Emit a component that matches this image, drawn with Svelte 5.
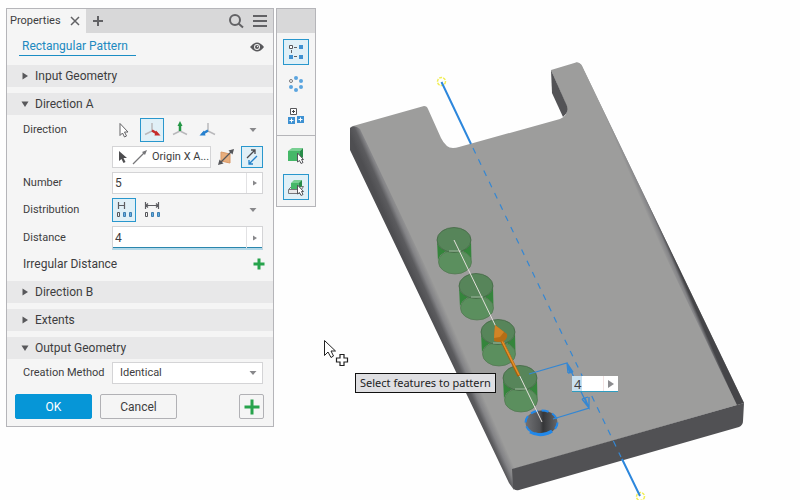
<script>
    let tool = $state('rectangular');
    let boundary = $state('geometry');
    let direction = $state('x');
    let distribution = $state('spacing');
    let flipped = $state(true);
    let number = $state('5');
    let distance = $state('4');
    let method = $state('Identical');
    let open = $state({ input: false, a: true, b: false, extents: false, output: true });

    const axes = [
        { id: 'pick', label: 'Select direction' },
        { id: 'x', label: 'X axis' },
        { id: 'y', label: 'Y axis' },
        { id: 'z', label: 'Z axis' }
    ];

    // one preview cylinder per occurrence, from far to near
    const copies = [
        { x: 454, y: 240 },
        { x: 476, y: 286 },
        { x: 498, y: 332 },
        { x: 520, y: 378 }
    ];
</script>

{#snippet header(key, title)}
    <h2>
        <button class="section-title" aria-expanded={open[key]} onclick={() => (open[key] = !open[key])}>
            <svg width="8" height="8" viewBox="0 0 8 8">
                {#if open[key]}
                    <path d="M0.5 1.5h7L4 7z" fill="#58585b" />
                {:else}
                    <path d="M1.5 0.5v7L7 4z" fill="#58585b" />
                {/if}
            </svg>
            {title}
        </button>
    </h2>
{/snippet}

{#snippet more(label)}
    <button class="more" aria-label={label}>
        <svg width="8" height="6" viewBox="0 0 8 6"><path d="M0.5 1h7L4 5z" fill="#88888b" /></svg>
    </button>
{/snippet}

<main>
    <div class="viewport">
        <svg class="scene" viewBox="0 0 800 500" role="img" aria-label="Plate with hole pattern preview">
            <defs>
                <linearGradient id="left-edge" gradientUnits="userSpaceOnUse" x1="430" y1="318" x2="446" y2="311">
                    <stop offset="0" stop-color="#4e4e51" />
                    <stop offset="0.4" stop-color="#5c5c5f" />
                    <stop offset="0.65" stop-color="#838386" />
                    <stop offset="1" stop-color="#9d9d9c" />
                </linearGradient>
                <linearGradient id="right-edge" gradientUnits="userSpaceOnUse" x1="657" y1="238" x2="664" y2="235">
                    <stop offset="0" stop-color="#9d9d9c" />
                    <stop offset="0.6" stop-color="#838386" />
                    <stop offset="1" stop-color="#454548" />
                </linearGradient>
                <linearGradient id="hole" x1="0" y1="0" x2="1" y2="0">
                    <stop offset="0" stop-color="#707174" />
                    <stop offset="0.45" stop-color="#505154" />
                    <stop offset="0.55" stop-color="#353638" />
                    <stop offset="1" stop-color="#66676a" />
                </linearGradient>
            </defs>

            <!-- plate -->
            <path d="M350 129Q350 127 353 126L424 106Q427 106 428 109L441 138Q446 148 453 148Q456 148 459 147L560 119Q568 116 567 107L551 70L576 62.500Q580 62 582 66L744 403L514 469Q510 468 508 464z" fill="#9d9d9c" />
            <path d="M350 128L350 150L509 483L514 490L514 468L520 465L360 129Q354 124 350 128z" fill="url(#left-edge)" />
            <path d="M576 62.500Q580 62 582 66L744 403L737 405L574 66z" fill="url(#right-edge)" />
            <path d="M512 469L744 403L743 421Q743 425 739 427L519 490Q514 491 513 487z" fill="#515154" />
            <path d="M551 70L567 106Q569 112 563 117L552 93z" fill="#535356" />

            <!-- axis -->
            <circle cx="441.500" cy="81.500" r="4" fill="none" stroke="#f1ee58" stroke-width="1.500" stroke-dasharray="3 1" />
            <circle cx="640.500" cy="496.500" r="4" fill="none" stroke="#f1ee58" stroke-width="1.500" stroke-dasharray="3 1" />
            <path d="M441.500 82L471 144M622 459L640 496" stroke="#2d87dc" stroke-width="2" />
            <path d="M473 148L621 457" stroke="#3487d3" stroke-width="1.200" stroke-dasharray="6 6.500" />

            {#each copies as c}
                <path d="M{c.x - 17} {c.y}L{c.x - 16} {c.y + 22}A16.500 12 0 0 1 {c.x + 17.5} {c.y + 22}L{c.x + 17} {c.y}A17 12.500 0 0 1 {c.x - 17} {c.y}z" fill="#35853c" />
                <ellipse cx={c.x + 1} cy={c.y + 22} rx="16.500" ry="12" fill="#5b8f5e" stroke="#50764f" stroke-width="0.700" />
                <ellipse cx={c.x} cy={c.y} rx="17" ry="12.500" fill="#57855a" stroke="#426744" stroke-width="0.800" />
                <path d="M{c.x - 5} {c.y + 11}h12" stroke="#9fb69e" stroke-width="1" />
            {/each}

            <!-- original hole -->
            <ellipse cx="541.500" cy="422.500" rx="16" ry="12" fill="url(#hole)" stroke="#2188ea" stroke-width="2" stroke-dasharray="7 4" />
            <path d="M530 432Q541 438 552 431" fill="none" stroke="#2188ea" stroke-width="3" />
            <path d="M454 240L542 422" stroke="#e4e0dc" stroke-width="1" />

            <!-- direction arrow -->
            <path d="M499 335L519 376" stroke="#a85f0a" stroke-width="3" />
            <path d="M499 335L519 375" stroke="#e6912b" stroke-width="1.500" />
            <path d="M495 325L507 334Q508 338 504 341Q499 343 494 341z" fill="#b56d15" />
            <path d="M495 325L504 332L500 337L494 338z" fill="#d18426" />

            <!-- dimension -->
            <path d="M529 374L567 363L589 408L553 419M567 363L568 373M567 363L573 372M568 373L573 372M567 363L570 373M582 399L589 408L589 397M582 399L588 397M585 398L589 408" fill="none" stroke="#3487d3" stroke-width="1.300" />

            <!-- pointer -->
            <path d="M324.500 340.500V355.500L328 352L331 357.500L333.500 356L331 351H335.500z" fill="#fff" stroke="#222" stroke-width="1" />
            <path d="M340 354.500h4v3.500h3.500v4H344v3.500h-4V362h-3.500v-4H340z" fill="#fff" stroke="#222" stroke-width="1.200" />
        </svg>

        <div class="tooltip" role="tooltip">Select features to pattern</div>
        <div class="dimension">
            <input aria-label="Spacing" bind:value={distance} />
            <button aria-label="Spacing options">
                <svg width="8" height="8" viewBox="0 0 8 8"><path d="M1 0v8l6-4z" fill="#8c8c8f" /></svg>
            </button>
        </div>
    </div>

    <section class="panel">
        <div class="tabs">
            <div class="tab">
                Properties
                <button class="plain" aria-label="Close">
                    <svg width="10" height="10" viewBox="0 0 10 10"><path d="M1 1l8 8M9 1l-8 8" stroke="#626265" stroke-width="1.500" /></svg>
                </button>
            </div>
            <button class="plain add-tab" aria-label="Add tab">
                <svg width="10" height="10" viewBox="0 0 10 10"><path d="M5 0v10M0 5h10" stroke="#626265" stroke-width="2" /></svg>
            </button>
            <div class="tab-tools">
                <button class="plain" aria-label="Search">
                    <svg width="16" height="16" viewBox="0 0 16 16"><circle cx="7" cy="7" r="5" fill="none" stroke="#626265" stroke-width="2" /><path d="M10.500 10.500l4.500 4" stroke="#626265" stroke-width="2" /></svg>
                </button>
                <button class="plain" aria-label="Menu">
                    <svg width="14" height="12" viewBox="0 0 14 12"><path d="M0 1h14M0 6h14M0 11h14" stroke="#626265" stroke-width="2" /></svg>
                </button>
            </div>
        </div>

        <div class="feature">
            <a href="#feature">Rectangular Pattern</a>
            <button class="plain" aria-label="Toggle preview">
                <svg width="14" height="10" viewBox="0 0 14 10"><path d="M0 5Q7-4 14 5Q7 14 0 5z" fill="#58585b" /><circle cx="7" cy="5" r="3" fill="#f5f5f5" /><circle cx="7" cy="5" r="2" fill="#58585b" /><circle cx="7.500" cy="4.500" r="0.700" fill="#f5f5f5" /></svg>
            </button>
        </div>

        {@render header('input', 'Input Geometry')}
        {@render header('a', 'Direction A')}
        {#if open.a}
            <div class="fields">
                <div class="row">
                    <span class="label" id="direction-label">Direction</span>
                    <div class="controls" role="group" aria-labelledby="direction-label">
                        {#each axes as axis}
                            <button class="icon" class:selected={direction === axis.id} aria-label={axis.label} onclick={() => (direction = axis.id)}>
                                <svg width="20" height="20" viewBox="0 0 20 20">
                                    {#if axis.id === 'pick'}
                                        <path d="M6 3.500v12l2.500-2.500 2 4 2-1-2-4h3.500z" fill="#fff" stroke="#626265" />
                                    {:else}
                                        <path d="M10 3v8M10 11l-7 3.500M10 11l7 3.500" stroke="#b9b9bc" stroke-width="1.500" />
                                        {#if axis.id === 'x'}
                                            <path d="M10 10.500l5 3" stroke="#c62c2b" stroke-width="2.500" /><path d="M14 10.500l4.500 5-6 0z" fill="#c62c2b" />
                                        {:else if axis.id === 'y'}
                                            <path d="M10 5v6" stroke="#249746" stroke-width="2.500" /><path d="M10 1l2.500 5h-5z" fill="#249746" />
                                        {:else}
                                            <path d="M10 10.500l-5 3" stroke="#2681d0" stroke-width="2.500" /><path d="M6 10.500l-4.500 5 6 0z" fill="#2681d0" />
                                        {/if}
                                    {/if}
                                </svg>
                            </button>
                        {/each}
                        {@render more('More direction options')}
                    </div>
                </div>
                <div class="row">
                    <span class="label"></span>
                    <div class="controls">
                        <button class="reference">
                            <svg width="32" height="16" viewBox="0 0 32 16">
                                <path d="M3 2v10l2.500-2 2 4 2-1-2-4H11z" fill="#4d4d50" />
                                <path d="M17 15L28 4" stroke="#77777a" stroke-width="1.300" /><path d="M31 1l-2 5-3-3z" fill="#77777a" />
                            </svg>
                            <span>Origin X A...</span>
                        </button>
                        <button class="icon midplane" aria-label="Midplane">
                            <svg width="18" height="18" viewBox="0 0 18 18">
                                <path d="M4 4l9 2v9l-9-2z" fill="#e8ae7d" stroke="#d99866" />
                                <path d="M3 15L15 3" stroke="#55565a" stroke-width="1.300" /><path d="M17 1l-1.500 5.500-4-4zM1 17l1.500-5.500 4 4z" fill="#55565a" />
                            </svg>
                        </button>
                        <button class="icon flip" class:selected={flipped} aria-label="Flip direction" aria-pressed={flipped} onclick={() => (flipped = !flipped)}>
                            <svg width="18" height="18" viewBox="0 0 18 18" fill="none">
                                <path d="M4 10l8-8M8 2h4v4" stroke="#4c4c50" stroke-width="1.300" />
                                <path d="M14 8l-8 8M6 12v4h4" stroke="#2381ca" stroke-width="1.300" />
                            </svg>
                        </button>
                    </div>
                </div>
                <div class="row">
                    <label class="label" for="number">Number</label>
                    <div class="value">
                        <input id="number" bind:value={number} />
                        <button aria-label="Number options"><svg width="6" height="6" viewBox="0 0 6 6"><path d="M1 0.500v5L5 3z" fill="#88888b" /></svg></button>
                    </div>
                </div>
                <div class="row">
                    <span class="label" id="distribution-label">Distribution</span>
                    <div class="controls" role="group" aria-labelledby="distribution-label">
                        {#each ['spacing', 'extent'] as kind}
                            <button class="icon" class:selected={distribution === kind} aria-label={kind} onclick={() => (distribution = kind)}>
                                <svg width="18" height="18" viewBox="0 0 18 18" fill="none">
                                    {#if kind === 'spacing'}
                                        <path d="M3.500 1v7M9.500 1v7M4 4.500h5" stroke="#5d5d61" stroke-width="1.200" />
                                    {:else}
                                        <path d="M2.500 1v7M15.500 1v7M3 4.500h12M5 2.500L3 4.500l2 2M13 2.500l2 2-2 2" stroke="#5d5d61" stroke-width="1.200" />
                                    {/if}
                                    <path d="M2.500 11.500h2v4h-2z" stroke="#55565a" />
                                    <path d="M8.500 11.500h2v4h-2zM14.500 11.500h2v4h-2z" fill="#65aee2" stroke="#3f7eaf" />
                                </svg>
                            </button>
                        {/each}
                        {@render more('More distribution options')}
                    </div>
                </div>
                <div class="row">
                    <label class="label" for="distance">Distance</label>
                    <div class="value active">
                        <input id="distance" bind:value={distance} />
                        <button aria-label="Distance options"><svg width="6" height="6" viewBox="0 0 6 6"><path d="M1 0.500v5L5 3z" fill="#88888b" /></svg></button>
                    </div>
                </div>
                <div class="irregular">
                    <span>Irregular Distance</span>
                    <button class="plain" aria-label="Add irregular distance">
                        <svg width="12" height="12" viewBox="0 0 12 12"><path d="M6 0.500v11M0.500 6h11" stroke="#27a34c" stroke-width="3" /></svg>
                    </button>
                </div>
            </div>
        {/if}
        {@render header('b', 'Direction B')}
        {@render header('extents', 'Extents')}
        {@render header('output', 'Output Geometry')}
        {#if open.output}
            <div class="fields output">
                <div class="row">
                    <label class="label" for="method">Creation Method</label>
                    <div class="select">
                        <select id="method" bind:value={method}>
                            <option>Identical</option>
                            <option>Optimized</option>
                            <option>Adjust</option>
                        </select>
                        <svg width="8" height="6" viewBox="0 0 8 6"><path d="M0.500 1h7L4 5z" fill="#88888b" /></svg>
                    </div>
                </div>
            </div>
        {/if}
        <div class="actions">
            <button class="ok">OK</button>
            <button class="cancel">Cancel</button>
            <button class="apply" aria-label="Apply and create new">
                <svg width="16" height="16" viewBox="0 0 16 16"><path d="M8 0.500v15M0.500 8h15" stroke="#27a34c" stroke-width="3" /></svg>
            </button>
        </div>
    </section>

    <aside class="palette">
        <div class="grip"></div>
        <div class="tools">
            <button class="tool" class:selected={tool === 'rectangular'} aria-label="Rectangular pattern" onclick={() => (tool = 'rectangular')}>
                <svg width="14" height="14" viewBox="0 0 14 14">
                    <path d="M5 2.500h4M2.500 5v4M5 11.500h4" stroke="#626265" stroke-dasharray="3 1" />
                    <path d="M0.500 0.500h3v3h-3z" fill="#fff" stroke="#58585b" />
                    <path d="M10 0h4v4h-4zM0 10h4v4H0zM10 10h4v4h-4z" fill="#3e91d2" />
                </svg>
            </button>
            <button class="tool" class:selected={tool === 'circular'} aria-label="Circular pattern" onclick={() => (tool = 'circular')}>
                <svg width="16" height="16" viewBox="0 0 16 16" fill="#5ba5df">
                    <circle cx="3" cy="5" r="1.500" fill="#fff" stroke="#77777a" />
                    <circle cx="8" cy="2" r="2" /><circle cx="13" cy="5" r="2" /><circle cx="13" cy="11" r="2" /><circle cx="8" cy="14" r="2" /><circle cx="3" cy="11" r="2" />
                </svg>
            </button>
            <button class="tool" class:selected={tool === 'sketch'} aria-label="Sketch driven pattern" onclick={() => (tool = 'sketch')}>
                <svg width="18" height="18" viewBox="0 0 18 18">
                    <path d="M3.500 1.500h6v6h-6z" fill="#fff" stroke="#58585b" /><path d="M6.500 3v3M5 4.500h3" stroke="#444" />
                    <path d="M1 10h7v7H1zM10 9h7v7h-7z" fill="#3e91d2" />
                    <path d="M4.500 11.500v4M2.500 13.500h4M13.500 10.500v4M11.500 12.500h4" stroke="#fff" />
                </svg>
            </button>
        </div>
        <div class="tools">
            <button class="tool" class:selected={boundary === 'solid'} aria-label="Pattern solids" onclick={() => (boundary = 'solid')}>
                <svg width="18" height="18" viewBox="0 0 18 18">
                    <path d="M1 5l4-3h11l-3 3z" fill="#78cf92" /><path d="M1 5h12v10H1z" fill="#45b868" /><path d="M13 5l3-3v9l-3 4z" fill="#278c48" />
                    <path d="M10.500 7v9l2-1.500 1.500 3 2-1-1.500-3h2z" fill="#fff" stroke="#55565a" />
                </svg>
            </button>
            <button class="tool" class:selected={boundary === 'geometry'} aria-label="Pattern features" onclick={() => (boundary = 'geometry')}>
                <svg width="18" height="18" viewBox="0 0 18 18">
                    <path d="M1.500 11.500l3-3h12l-2 3v4h-13z" fill="#e8e8e9" stroke="#77777a" /><path d="M2 11.500h11" stroke="#77777a" />
                    <path d="M4 5l3-3h8l-2 3z" fill="#78cf92" /><path d="M4 5h8l-1 6H4z" fill="#45b868" /><path d="M12 5l3-3v6l-4 3z" fill="#278c48" />
                    <path d="M10.500 7v9l2-1.500 1.500 3 2-1-1.500-3h2z" fill="#fff" stroke="#55565a" />
                </svg>
            </button>
        </div>
    </aside>
</main>

<style>
:global(body) {
    background-color: #fefefe;
}

main {
    position: relative;
    display: flex;
    align-items: flex-start;
    gap: 2px;
    min-height: 100vh;
    padding: 8px 6px;
    box-sizing: border-box;
    overflow: hidden;
    font-family: "Noto Sans", "Open Sans", sans-serif;
    font-size: 11px;
    line-height: 16px;
    color: #3d3d40;
}

button, input, select {
    box-sizing: border-box;
    margin: 0;
    padding: 0;
    border: 0;
    border-radius: 0;
    background: none;
    color: inherit;
    font: inherit;
}

button {
    cursor: pointer;
}

svg {
    display: block;
    flex: none;
}

.viewport {
    position: absolute;
    top: 0;
    left: 0;
    width: 100%;
    aspect-ratio: 8 / 5;
}

.scene {
    width: 100%;
    height: 100%;
}

.tooltip {
    position: absolute;
    left: 44.375%;
    top: 74.600%;
    padding: 1px 4px;
    border: 1px solid #111;
    background-color: #dfdfe2;
    color: #222;
    white-space: nowrap;
}

.dimension {
    position: absolute;
    left: 71.500%;
    top: 75.200%;
    display: flex;
    width: 46px;
    height: 16px;
    box-sizing: border-box;
    border-bottom: 1px solid #2e9cc0;
    background-color: #fff;
}

.dimension input {
    flex: 1;
    min-width: 0;
    padding-left: 2px;
    font-size: 13px;
    background: linear-gradient(90deg, #c9e0ef 10px, #fff 10px);
}

.dimension button {
    display: flex;
    align-items: center;
    justify-content: center;
    width: 15px;
    border-left: 1px solid #f1e2e2;
}

.panel {
    position: relative;
    width: 34%;
    min-width: 268px;
    max-width: 268px;
    box-sizing: border-box;
    border: 1px solid #b5b5b9;
    background-color: #f5f5f5;
    font-family: Roboto, "Noto Sans", sans-serif;
}

.tabs {
    display: flex;
    height: 24px;
    background-color: #d8d8d9;
}

.tab {
    display: flex;
    align-items: center;
    gap: 9px;
    padding: 0 6px 0 3px;
    background-color: #f5f5f5;
}

.plain {
    display: flex;
    align-items: center;
}

.add-tab {
    padding: 0 7px;
}

.tab-tools {
    display: flex;
    gap: 9px;
    margin-left: auto;
    padding-right: 6px;
}

.feature {
    display: flex;
    justify-content: space-between;
    align-items: flex-start;
    height: 32px;
    box-sizing: border-box;
    padding: 5px 9px 0 12px;
}

.feature a {
    padding: 0 8px 0 3px;
    border-bottom: 1px solid #1b8dc4;
    color: #2089c0;
    font-size: 12px;
    line-height: 17px;
    text-decoration: none;
}

.feature .plain {
    height: 18px;
}

h2 {
    margin: 0;
    font-weight: normal;
}

h2 + h2 {
    margin-top: 6px;
}

.section-title {
    display: flex;
    align-items: center;
    gap: 6px;
    width: 100%;
    height: 22px;
    padding-left: 14px;
    background-color: #e8e8e9;
    font-size: 12px;
}

.fields {
    display: flex;
    flex-direction: column;
    gap: 4px;
    padding: 3px 10px 7px 16px;
}

.fields.output {
    padding-bottom: 0;
}

.row {
    display: flex;
    align-items: center;
}

.label {
    flex: 0 0 89px;
    white-space: nowrap;
}

.controls, .value, .select {
    flex: 1;
    min-width: 0;
    display: flex;
    align-items: center;
}

.controls {
    gap: 4px;
}

.icon {
    display: flex;
    flex: none;
    align-items: center;
    justify-content: center;
    width: 24px;
    height: 24px;
}

.icon.midplane, .icon.flip {
    width: 22px;
    height: 22px;
}

.icon.selected, .tool.selected {
    border: 1px solid #2997cd;
    background-color: #e0f0f7;
}

.more {
    display: flex;
    justify-content: center;
    align-items: center;
    width: 20px;
    height: 20px;
    margin-left: auto;
}

.reference {
    display: flex;
    align-items: center;
    gap: 4px;
    flex: 1;
    min-width: 0;
    height: 22px;
    padding: 0 2px 0 3px;
    border: 1px solid #d4d4d6;
    background-color: #fff;
    white-space: nowrap;
}

.value {
    height: 22px;
    box-sizing: border-box;
    border: 1px solid #d4d4d6;
    background-color: #fff;
}

.value input {
    flex: 1;
    min-width: 0;
    padding-left: 2px;
    font-size: 12px;
}

.value button {
    display: flex;
    align-items: center;
    justify-content: center;
    align-self: stretch;
    width: 16px;
    border-left: 1px solid #e2e2e4;
}

.value.active {
    height: 24px;
    border-bottom: 2px solid #b3d8e8;
    box-shadow: inset 0 -1px #2a86ad;
}

.irregular {
    display: flex;
    align-items: center;
    justify-content: space-between;
    height: 20px;
    margin-right: -2px;
    font-size: 12px;
}

.select {
    position: relative;
}

.select select {
    width: 100%;
    height: 22px;
    padding-left: 7px;
    border: 1px solid #d4d4d6;
    background-color: #fff;
    appearance: none;
}

.select svg {
    position: absolute;
    right: 6px;
    pointer-events: none;
}

.actions {
    display: flex;
    gap: 8px;
    padding: 10px 9px 7px 8px;
}

.actions button {
    height: 25px;
    border: 1px solid #b1b1b5;
    border-radius: 2px;
}

.actions .ok, .actions .cancel {
    width: 77px;
    font-size: 12px;
}

.actions .ok {
    border-color: #0696d7;
    background-color: #0696d7;
    color: #fff;
}

.actions .apply {
    display: flex;
    align-items: center;
    justify-content: center;
    width: 25px;
    margin-left: auto;
}

.palette {
    position: relative;
    border: 1px solid #b5b5b9;
    background-color: #f5f5f5;
}

.grip {
    height: 24px;
    background-color: #d8d8d9;
}

.tools {
    display: flex;
    flex-direction: column;
    gap: 6px;
    padding: 6px;
}

.tools + .tools {
    border-top: 1px solid #b5b5b9;
}

.tool {
    display: flex;
    align-items: center;
    justify-content: center;
    width: 26px;
    height: 26px;
}
</style>
